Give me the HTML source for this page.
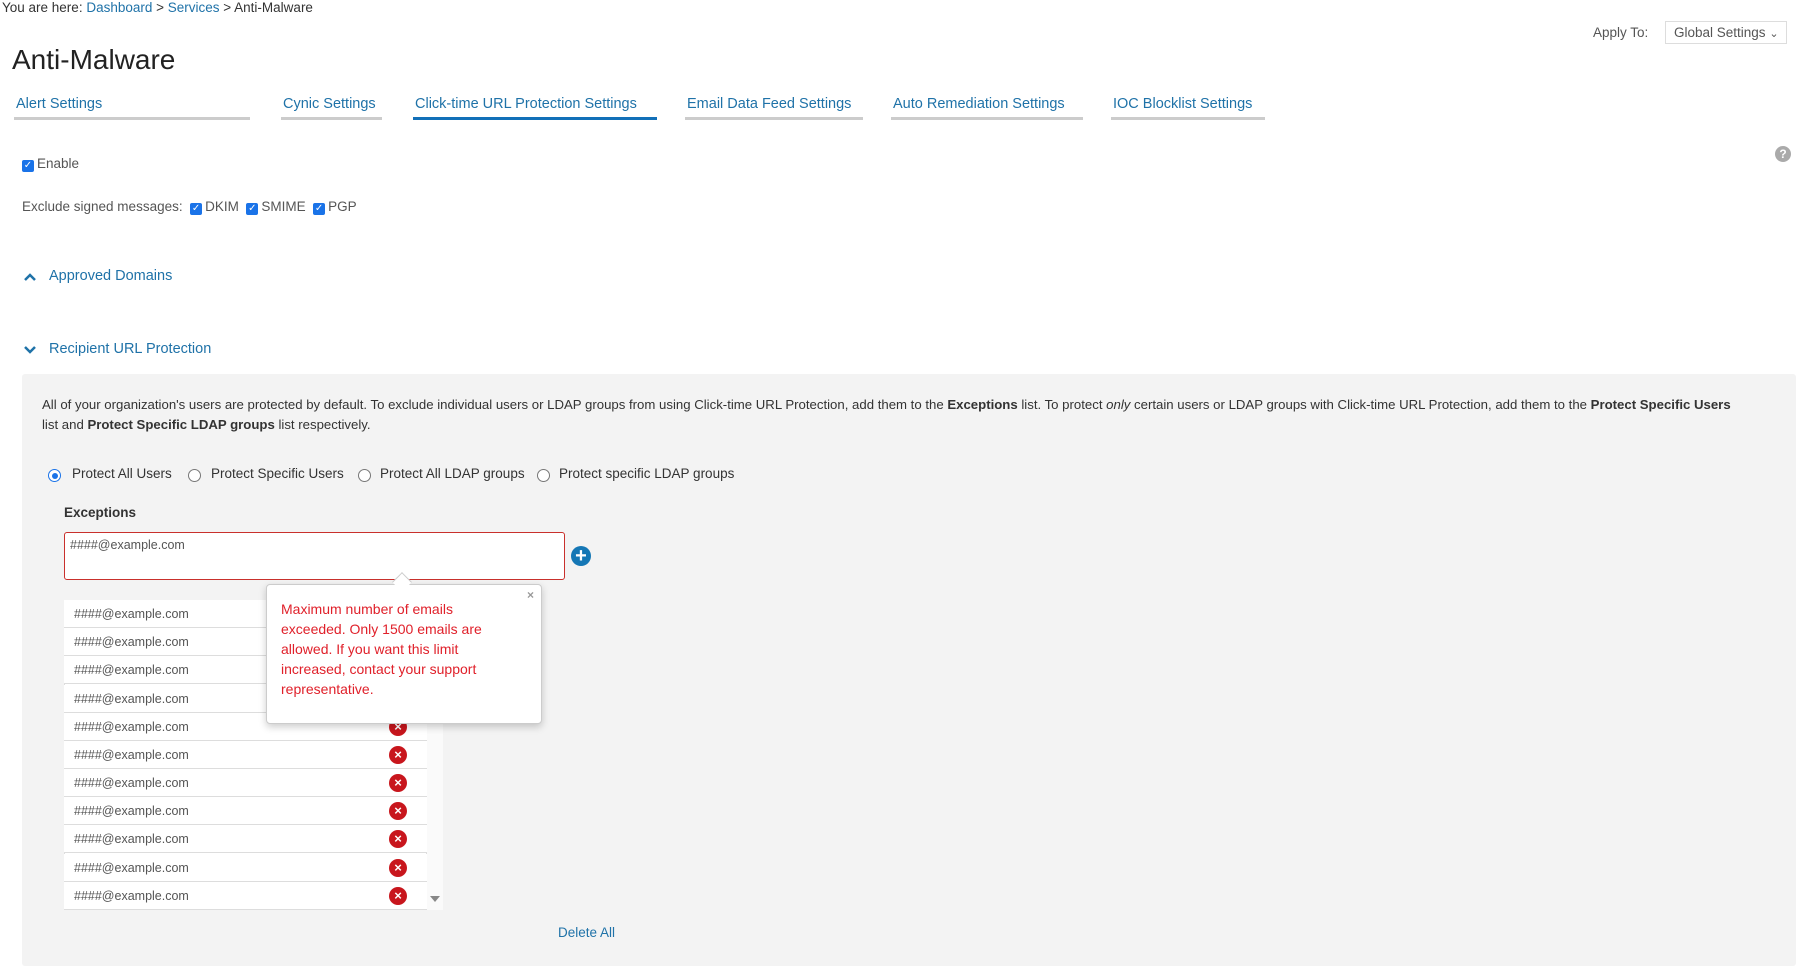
<!DOCTYPE html>
<html><head><meta charset="utf-8"><style>
*{box-sizing:border-box;margin:0;padding:0}
body{width:1806px;height:966px;overflow:hidden;background:#fff;font-family:"Liberation Sans",sans-serif;color:#333;position:relative}
.a{position:absolute;white-space:nowrap}
.blue{color:#1f72a8}
.tab{position:absolute;top:96px;height:24px;font-size:14.5px;color:#1f72a8;border-bottom:3px solid #ccc;padding-left:2px;white-space:nowrap}
.tab.on{border-bottom-color:#1270b8}
.cb{display:inline-block;width:12px;height:12px;background:#1a73e8;border-radius:2px;color:#fff;font-size:10px;line-height:12px;text-align:center;vertical-align:0px;margin-right:3px}
.radio{position:absolute;width:13px;height:13px;border:1px solid #777;border-radius:50%;background:#fff}
.radio.on{border-color:#1a73e8}
.radio.on:after{content:"";position:absolute;left:2.5px;top:2.5px;width:6px;height:6px;border-radius:50%;background:#1a73e8}
.row{position:absolute;left:64px;width:363px;height:28.2px;border-bottom:1px solid #ddd;background:#fff;font-size:12.5px;color:#555;padding-left:10px;line-height:28px}
.x{position:absolute;left:389px;width:18px;height:18px;border-radius:50%;background:#c8161d;color:#fff;font-size:13px;font-weight:bold;text-align:center;line-height:18px}
</style></head><body>
<div class="a" style="left:2px;top:0;font-size:13.5px;color:#333">You are here: <span class="blue">Dashboard</span> &gt; <span class="blue">Services</span> &gt; Anti-Malware</div>
<div class="a" style="left:12px;top:44px;font-size:28px;color:#222">Anti-Malware</div>
<div class="a" style="left:1593px;top:25px;font-size:13.5px;color:#555">Apply To:</div>
<div class="a" style="left:1665px;top:21px;width:122px;height:23px;border:1px solid #ddd;font-size:13.5px;color:#555;padding:3px 0 0 8px">Global Settings <span style="font-size:11px">&#8964;</span></div>
<div class="tab" style="left:14px;width:236px">Alert Settings</div>
<div class="tab" style="left:281px;width:101px">Cynic Settings</div>
<div class="tab on" style="left:413px;width:244px">Click-time URL Protection Settings</div>
<div class="tab" style="left:685px;width:178px">Email Data Feed Settings</div>
<div class="tab" style="left:891px;width:192px">Auto Remediation Settings</div>
<div class="tab" style="left:1111px;width:154px">IOC Blocklist Settings</div>
<div class="a" style="left:1775px;top:146px;width:16px;height:16px;border-radius:50%;background:#aaa;color:#fff;font-size:12px;font-weight:bold;text-align:center;line-height:16px">?</div>
<div class="a" style="left:22px;top:156px;font-size:13.5px;color:#555"><span class="cb">✓</span>Enable</div>
<div class="a" style="left:22px;top:199px;font-size:13.5px;color:#555">Exclude signed messages: &nbsp;<span class="cb">✓</span>DKIM &nbsp;<span class="cb">✓</span>SMIME &nbsp;<span class="cb">✓</span>PGP</div>
<svg class="a" style="left:23px;top:272px" width="14" height="10"><path d="M2 8 L7 3 L12 8" stroke="#1f72a8" stroke-width="2.5" fill="none"/></svg>
<div class="a blue" style="left:49px;top:268px;font-size:14.5px">Approved Domains</div>
<svg class="a" style="left:23px;top:345px" width="14" height="10"><path d="M2 2 L7 7 L12 2" stroke="#1f72a8" stroke-width="2.5" fill="none"/></svg>
<div class="a blue" style="left:49px;top:341px;font-size:14.5px">Recipient URL Protection</div>
<div class="a" style="left:22px;top:374px;width:1774px;height:592px;background:#f3f3f3;border-radius:3px"></div>
<div class="a" style="left:42px;top:395px;font-size:13.2px;line-height:20px;color:#333;white-space:normal;width:1690px">All of your organization's users are protected by default. To exclude individual users or LDAP groups from using Click-time URL Protection, add them to the <b>Exceptions</b> list. To protect <i>only</i> certain users or LDAP groups with Click-time URL Protection, add them to the <b>Protect Specific Users</b> list and <b>Protect Specific LDAP groups</b> list respectively.</div>
<div class="radio on" style="left:48px;top:469px"></div><div class="a" style="left:72px;top:466px;font-size:13.5px">Protect All Users</div>
<div class="radio" style="left:188px;top:469px"></div><div class="a" style="left:211px;top:466px;font-size:13.5px">Protect Specific Users</div>
<div class="radio" style="left:358px;top:469px"></div><div class="a" style="left:380px;top:466px;font-size:13.5px">Protect All LDAP groups</div>
<div class="radio" style="left:537px;top:469px"></div><div class="a" style="left:559px;top:466px;font-size:13.5px">Protect specific LDAP groups</div>
<div class="a" style="left:64px;top:505px;font-size:13.5px;font-weight:bold;color:#333">Exceptions</div>
<div class="a" style="left:64px;top:532px;width:501px;height:48px;border:1px solid #c9302c;border-radius:3px;background:#fff;font-size:12.5px;color:#555;padding:5px 0 0 5px">####@example.com</div>
<div class="a" style="left:571px;top:546px;width:20px;height:20px;border-radius:50%;background:#1577b5;color:#fff;font-size:20px;font-weight:bold;text-align:center;line-height:20px">+</div>
<div class="a" style="left:427px;top:600px;width:16px;height:310px;background:#fafafa"></div>
<div class="a" style="left:430px;top:896px;width:0;height:0;border:5px solid transparent;border-top:6px solid #888"></div>
<div class="a" style="left:64px;top:600px;width:363px;height:310px;border:1px solid #ddd;background:#fff"></div>
<div class="row" style="top:600px">####@example.com</div>
<div class="row" style="top:628px">####@example.com</div>
<div class="row" style="top:656px">####@example.com</div>
<div class="row" style="top:685px">####@example.com</div>
<div class="row" style="top:713px">####@example.com</div><div class="x" style="top:718px">×</div>
<div class="row" style="top:741px">####@example.com</div><div class="x" style="top:746px">×</div>
<div class="row" style="top:769px">####@example.com</div><div class="x" style="top:774px">×</div>
<div class="row" style="top:797px">####@example.com</div><div class="x" style="top:802px">×</div>
<div class="row" style="top:825px">####@example.com</div><div class="x" style="top:830px">×</div>
<div class="row" style="top:854px">####@example.com</div><div class="x" style="top:859px">×</div>
<div class="row" style="top:882px">####@example.com</div><div class="x" style="top:887px">×</div>
<div class="a" style="left:266px;top:584px;width:276px;height:140px;background:#fff;border:1px solid #ccc;border-radius:4px;box-shadow:0 3px 8px rgba(0,0,0,.2)"></div>
<div class="a" style="left:395px;top:575px;width:14px;height:14px;background:#fff;border-left:1px solid #ccc;border-top:1px solid #ccc;transform:rotate(45deg)"></div>
<div class="a" style="left:527px;top:588px;font-size:12px;color:#999;font-weight:bold">×</div>
<div class="a" style="left:281px;top:599px;font-size:14px;line-height:20px;color:#e0202a;white-space:normal;width:230px">Maximum number of emails exceeded. Only 1500 emails are allowed. If you want this limit increased, contact your support representative.</div>
<div class="a blue" style="left:558px;top:925px;font-size:13.5px">Delete All</div>
</body></html>
